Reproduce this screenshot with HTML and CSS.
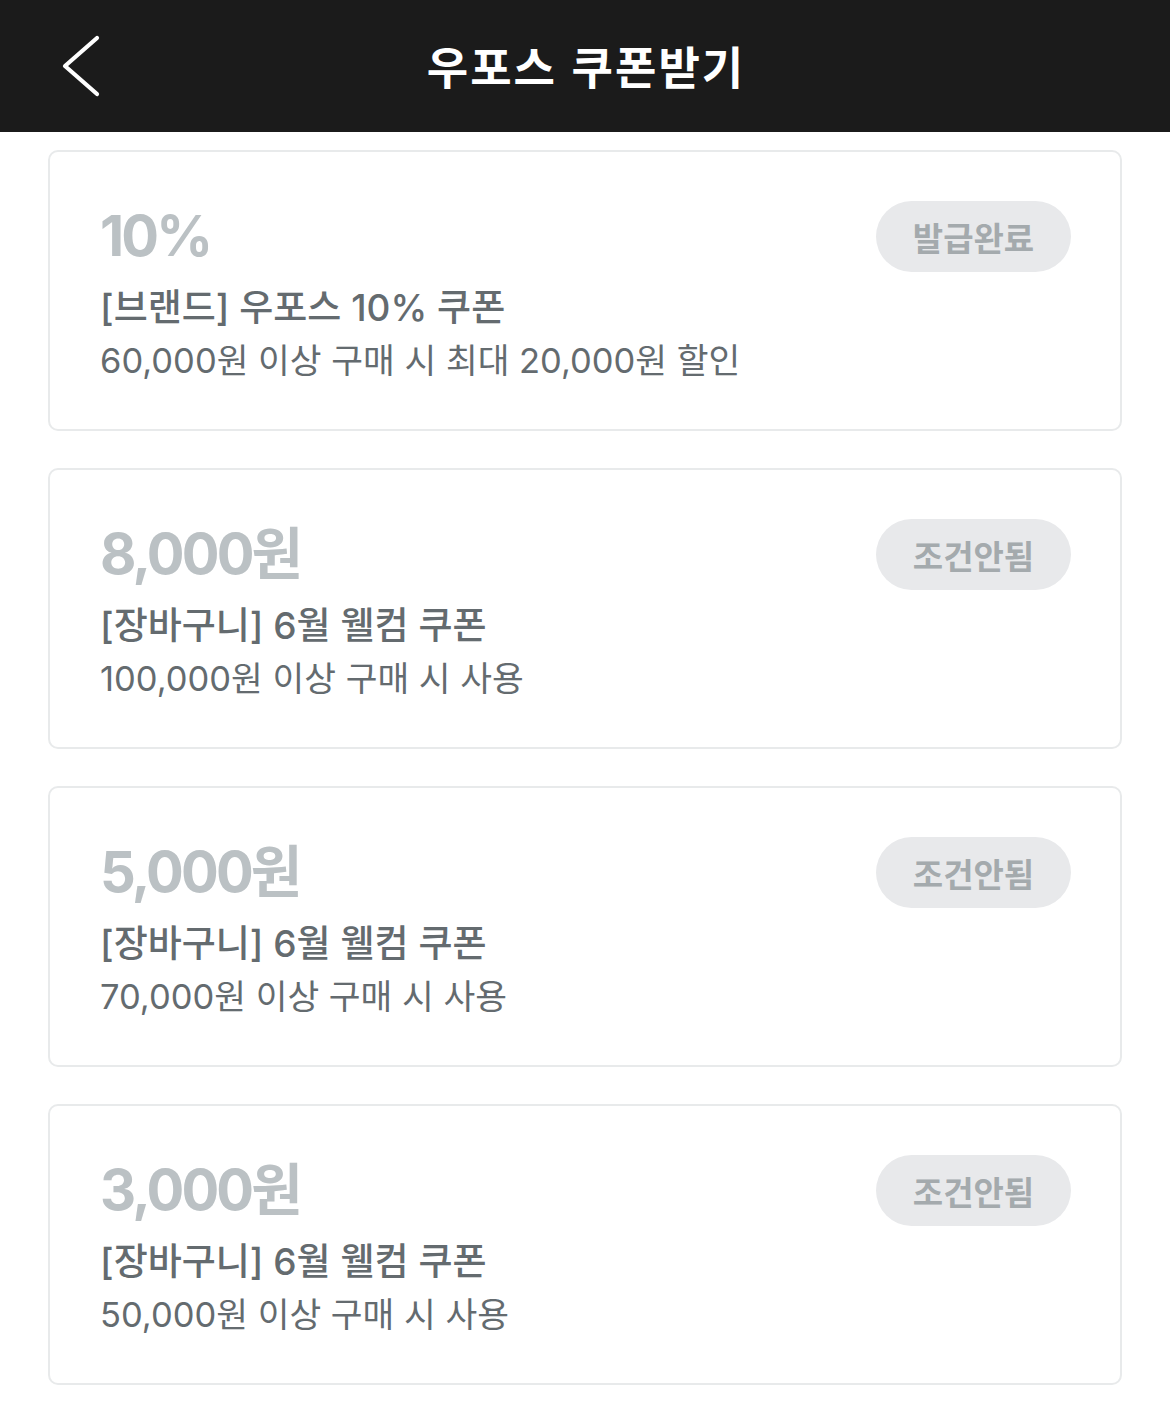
FILE: index.html
```html
<!DOCTYPE html>
<html lang="ko">
<head>
<meta charset="utf-8">
<title>우포스 쿠폰받기</title>
<link rel="stylesheet" href="styles.css">
</head>
<body>
<header class="topbar">
  <button class="back" aria-label="뒤로">
    <svg width="40" height="64" viewBox="0 0 40 64"><polyline points="36,4 4,32 36,60" fill="none" stroke="#fff" stroke-width="4.2" stroke-linecap="round" stroke-linejoin="round"/></svg>
  </button>
  <h1 class="title">우포스 쿠폰받기</h1>
</header>
<main class="list">
  <section class="card">
    <div class="row">
      <div class="amount">10%</div>
      <span class="badge">발급완료</span>
    </div>
    <div class="name">[브랜드] 우포스 10% 쿠폰</div>
    <div class="cond">60,000원 이상 구매 시 최대 20,000원 할인</div>
  </section>
  <section class="card">
    <div class="row">
      <div class="amount">8,000원</div>
      <span class="badge">조건안됨</span>
    </div>
    <div class="name">[장바구니] 6월 웰컴 쿠폰</div>
    <div class="cond">100,000원 이상 구매 시 사용</div>
  </section>
  <section class="card">
    <div class="row">
      <div class="amount">5,000원</div>
      <span class="badge">조건안됨</span>
    </div>
    <div class="name">[장바구니] 6월 웰컴 쿠폰</div>
    <div class="cond">70,000원 이상 구매 시 사용</div>
  </section>
  <section class="card">
    <div class="row">
      <div class="amount">3,000원</div>
      <span class="badge">조건안됨</span>
    </div>
    <div class="name">[장바구니] 6월 웰컴 쿠폰</div>
    <div class="cond">50,000원 이상 구매 시 사용</div>
  </section>
</main>
</body>
</html>
```
FILE: styles.css
```css
* { box-sizing: border-box; }
html, body { margin: 0; padding: 0; background: #fff; }
body { font-family: Inter, "Noto Sans CJK KR", sans-serif; }

.topbar {
  height: 132px;
  background: #1b1b1b;
  display: flex;
  align-items: center;
  justify-content: center;
  position: relative;
}
.back {
  position: absolute;
  left: 61px;
  top: 34px;
  width: 40px;
  height: 64px;
  padding: 0;
  border: 0;
  background: none;
  display: flex;
}
.title {
  margin: 0;
  color: #fff;
  font-family: "Noto Sans CJK KR", sans-serif;
  font-size: 45px;
  font-weight: 700;
  letter-spacing: 2px;
  line-height: 1;
  margin-top: -2px;
  padding-left: 2px;
}

.list {
  padding: 18px 48px 20px 48px;
  display: flex;
  flex-direction: column;
  gap: 37px;
}
.card {
  height: 281px;
  border: 2px solid #e8eaeb;
  border-radius: 10px;
  padding: 49px 49px 0 50px;
  display: flex;
  flex-direction: column;
}
.row {
  display: flex;
  align-items: center;
  justify-content: space-between;
  height: 71px;
}
.amount {
  font-size: 56px;
  font-weight: 700;
  color: #bbc1c4;
  line-height: 1;
  letter-spacing: -2.8px;
  margin-top: -1px;
}
.badge {
  width: 195px;
  height: 71px;
  border-radius: 36px;
  background: #e8e9eb;
  color: #a4aaad;
  font-family: "Noto Sans CJK KR", sans-serif;
  font-size: 33px;
  font-weight: 700;
  display: flex;
  align-items: center;
  justify-content: center;
}
.name {
  margin-top: 12px;
  font-size: 37px;
  font-weight: 500;
  color: #646b6f;
  line-height: 48px;
}
.cond {
  margin-top: 5px;
  font-size: 34.5px;
  font-weight: 400;
  color: #646b6f;
  line-height: 48px;
}
```
